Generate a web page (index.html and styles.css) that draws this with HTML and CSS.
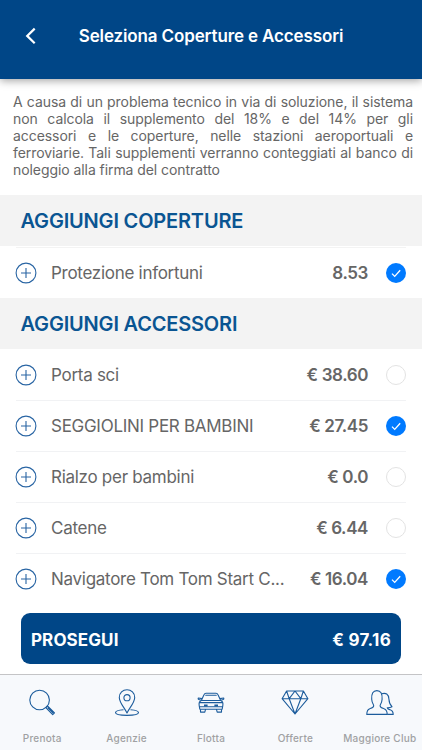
FILE: index.html
```html
<!DOCTYPE html>
<html lang="it">
<head>
  <meta charset="UTF-8" />
  <meta name="viewport" content="width=device-width, initial-scale=1" />
  <title>Seleziona Coperture e Accessori</title>
  <link rel="stylesheet" href="styles.css">
</head>
<body>

<svg class="sprite" width="0" height="0">
  <symbol id="plus" viewBox="0 0 22 22">
    <circle cx="11" cy="11" r="9.9" />
    <path d="M11 6v10M6 11h10" />
  </symbol>
  <symbol id="tick" viewBox="0 0 20 20">
    <path d="M6 10.600l2.700 2.800 5.500-6.200" />
  </symbol>
</svg>

<header class="header">
  <button class="back" aria-label="Indietro">
    <svg width="12" height="18" viewBox="0 0 12 18"><path d="M9.700 1.600L2.200 8.900l7.500 7.400" /></svg>
  </button>
  <h1>Seleziona Coperture e Accessori</h1>
</header>

<main class="content">
  <p class="notice">A causa di un problema tecnico in via di soluzione, il sistema non calcola il supplemento del 18% e del 14% per gli accessori e le coperture, nelle stazioni aeroportuali e ferroviarie. Tali supplementi verranno conteggiati al banco di noleggio alla firma del contratto</p>

  <h2 class="section">AGGIUNGI COPERTURE</h2>
  <ul class="list list-top">
    <li class="row">
      <svg class="plus"><use href="#plus" /></svg>
      <span class="name">Protezione infortuni</span>
      <span class="price">8.53</span>
      <span class="check checked"><svg><use href="#tick" /></svg></span>
    </li>
  </ul>

  <h2 class="section">AGGIUNGI ACCESSORI</h2>
  <ul class="list">
    <li class="row">
      <svg class="plus"><use href="#plus" /></svg>
      <span class="name">Porta sci</span>
      <span class="price">€ 38.60</span>
      <span class="check"></span>
    </li>
    <li class="row">
      <svg class="plus"><use href="#plus" /></svg>
      <span class="name">SEGGIOLINI PER BAMBINI</span>
      <span class="price">€ 27.45</span>
      <span class="check checked"><svg><use href="#tick" /></svg></span>
    </li>
    <li class="row">
      <svg class="plus"><use href="#plus" /></svg>
      <span class="name">Rialzo per bambini</span>
      <span class="price">€ 0.0</span>
      <span class="check"></span>
    </li>
    <li class="row">
      <svg class="plus"><use href="#plus" /></svg>
      <span class="name">Catene</span>
      <span class="price">€ 6.44</span>
      <span class="check"></span>
    </li>
    <li class="row">
      <svg class="plus"><use href="#plus" /></svg>
      <span class="name">Navigatore Tom Tom Start C...</span>
      <span class="price">€ 16.04</span>
      <span class="check checked"><svg><use href="#tick" /></svg></span>
    </li>
  </ul>

  <button class="submit">
    <span>PROSEGUI</span>
    <span class="total">€ 97.16</span>
  </button>
</main>

<nav class="tabs">
  <a class="tab">
    <svg viewBox="0 0 28 28">
      <circle cx="11.600" cy="12" r="9.800" />
      <path d="M17.800 19.600l1.700-1.600 7 6.900-1.800 1.800zM19.700 19.500l5.500 5.600" />
    </svg>
    <span>Prenota</span>
  </a>
  <a class="tab">
    <svg viewBox="0 0 28 28">
      <path d="M14 25C11.700 20 6.300 14.600 6.300 9.400a7.700 7.700 0 0 1 15.400 0c0 5.200-5.400 10.600-7.700 15.600z" />
      <circle cx="14" cy="9.700" r="3.100" />
      <path d="M10.500 21.700c-4.500.3-8 1.400-8 2.900 0 1.700 5 2.800 11.500 2.800s11.500-1.100 11.500-2.800c0-1.500-3.500-2.600-8-2.900" />
    </svg>
    <span>Agenzie</span>
  </a>
  <a class="tab">
    <svg viewBox="0 0 28 28">
      <path d="M4.300 12.500L7 6.700q.6-1.400 2-1.400h10q1.400 0 2 1.400l2.700 5.800M8.300 7.200h11.400M4.300 12.500h19.400c2 .8 2.500 3 2.100 5.200l-.6 3.500H2.800l-.6-3.500c-.4-2.200.1-4.400 2.100-5.200zM2.500 14.600h23M2.600 18.800h22.800" />
      <path d="M5.200 10.600L1.300 10c-.6 1.100.3 2 2.600 2M22.800 10.600l3.900-.6c.6 1.100-.3 2-2.600 2M3.500 21.200v2.900h4.300l.8-2.900M24.500 21.200v2.900h-4.300l-.8-2.900" />
      <path class="solid" d="M7 16.500h3.600v2H7zM17.400 16.500H21v2h-3.600z" />
    </svg>
    <span>Flotta</span>
  </a>
  <a class="tab">
    <svg viewBox="0 0 28 28">
      <path d="M5.600 3h16.800l4.500 7.700L14 26 1.100 10.700zM1.100 10.700h25.800M5.600 3l2.600 7.700L14 3l5.800 7.700L22.400 3M8.200 10.700L14 26l5.800-15.300" />
    </svg>
    <span>Offerte</span>
  </a>
  <a class="tab">
    <svg viewBox="0 0 28 28">
      <path d="M.8 26.400c0-3.300.5-4.900 3-5.700 2.600-.8 3.900-1.100 3.900-3 0-1.700-1.700-2.200-2-6.500C5.400 5.700 7 2.600 10.900 2.600s5.500 3.100 5.200 8.600c-.3 4.300-2 4.800-2 6.500 0 1.900 1.300 2.200 3.900 3 2.500.8 3.200 2.400 3.200 5.700z" />
      <path d="M15.600 5.800c4.300-1.400 7 .4 7.300 5.200.2 3.500 1 5.800 3.100 7.700-1.400.8-3 1.100-4.800 1 .3 1.500 1.300 1.600 2.900 2.100 2.400.8 3.100 1.800 3.100 4.600h-6" />
    </svg>
    <span>Maggiore Club</span>
  </a>
</nav>

</body>
</html>
```

FILE: styles.css
```css
* {
  box-sizing: border-box;
}

body {
  margin: 0;
  height: 750px;
  display: flex;
  flex-direction: column;
  overflow: hidden;
  background: #fff;
  color: #666;
  font-family: Inter, "Liberation Sans", sans-serif;
}

svg {
  display: block;
  fill: none;
}

.sprite {
  position: absolute;
}

button {
  border: none;
  font-family: inherit;
  cursor: pointer;
}

/* header */
.header {
  display: grid;
  grid-template-columns: 62px 1fr 62px;
  align-items: center;
  height: 79px;
  padding-bottom: 7px;
  background: #004687;
  color: #fff;
  box-shadow: 0 2px 8px rgba(0, 0, 0, 0.35);
}

.back {
  padding: 0 0 0 25px;
  background: none;
}

.back svg {
  stroke: #fff;
  stroke-width: 2.2;
}

h1 {
  margin: 0;
  font-size: 17px;
  font-weight: 600;
  letter-spacing: -0.13px;
  text-align: center;
  white-space: nowrap;
}

/* content */
.content {
  flex: 1;
}

.notice {
  margin: 0;
  padding: 14px 9px 17px 13px;
  font-size: 14px;
  letter-spacing: -0.07px;
  line-height: 17px;
  text-align: justify;
}

.section {
  height: 51px;
  margin: 0;
  padding: 1px 0 0 20.5px;
  background: #f3f3f3;
  color: #0a5592;
  font-size: 20px;
  font-weight: 600;
  letter-spacing: -0.18px;
  line-height: 51px;
}

.list {
  margin: 0;
  padding: 0 16px;
  list-style: none;
}

.list-top {
  padding-top: 1px;
}

.list-top .row {
  border-top: 1px solid #f3f3f3;
}

.row {
  display: flex;
  align-items: center;
  height: 51px;
}

.row + .row {
  border-top: 1px solid #f1f2f4;
}

.plus {
  width: 22px;
  height: 22px;
  margin-left: -1px;
  stroke: #2864a3;
  stroke-width: 1.1;
}

.name {
  flex: 1;
  padding-left: 14px;
  font-size: 17px;
  letter-spacing: -0.28px;
  white-space: nowrap;
}

.price {
  font-size: 17px;
  font-weight: 600;
  letter-spacing: -0.4px;
}

.check {
  width: 20px;
  height: 20px;
  margin-left: 18px;
  border: 1px solid #e3e3e3;
  border-radius: 50%;
}

.checked {
  border: none;
  background: #007aff;
}

.checked svg {
  width: 20px;
  height: 20px;
  stroke: #fff;
  stroke-width: 1.3;
}

.submit {
  display: flex;
  justify-content: space-between;
  align-items: center;
  width: 380px;
  height: 51px;
  margin: 9px 0 0 21px;
  padding: 2px 10px 0;
  border-radius: 9px;
  background: #004687;
  color: #fff;
  font-size: 17px;
  font-weight: 700;
  letter-spacing: 0.1px;
}

.total {
  letter-spacing: 0.3px;
}

/* bottom tabs */
.tabs {
  display: grid;
  grid-template-columns: repeat(5, 1fr);
  height: 76px;
  border-top: 1px solid #c4c4c6;
  background: #f7f9fc;
}

.tab {
  display: flex;
  flex-direction: column;
  align-items: center;
  padding-top: 13px;
  color: #a0a1a3;
  font-size: 10px;
  font-weight: 500;
  letter-spacing: 0.24px;
  white-space: nowrap;
}

.tab svg {
  width: 28px;
  height: 28px;
  margin-bottom: 16px;
  stroke: #1c5c9c;
  stroke-width: 1.1;
  stroke-linejoin: round;
}

.tab .solid {
  fill: #1c5c9c;
  stroke: none;
}
```
